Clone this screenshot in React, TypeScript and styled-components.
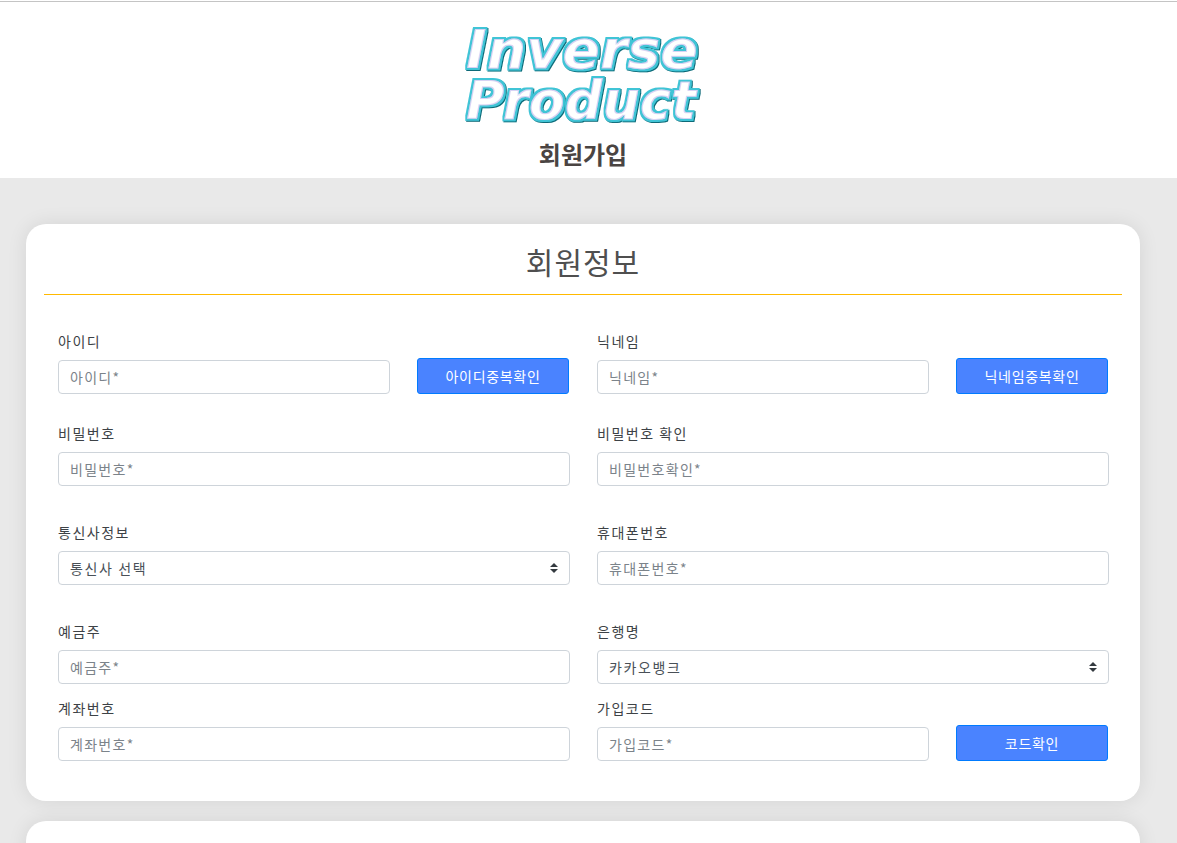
import React from "react";
import styled, { createGlobalStyle } from "styled-components";

const GlobalStyle = createGlobalStyle`
  html, body {
    margin: 0;
    padding: 0;
    height: 100%;
    overflow: hidden;
    background: #e9e9e9;
  }
  * {
    box-sizing: border-box;
  }
  body {
    font-family: "Noto Sans CJK KR", "Noto Sans", sans-serif;
    color: #212529;
  }
`;

const Page = styled.div`
  height: 843px;
  overflow: hidden;
  background: #e9e9e9;
`;

const TopRule = styled.div`
  align-self: stretch;
  height: 2px;
  border-bottom: 1px solid #c4c4c4;
`;

const Header = styled.header`
  height: 178px;
  background: #fff;
  display: flex;
  flex-direction: column;
  align-items: center;
`;

const HeaderBody = styled.div`
  padding: 21px 11px 0 0;
  display: flex;
  flex-direction: column;
  align-items: center;
`;

const SignupTitle = styled.h1`
  margin: 12px 0 0;
  font-size: 24px;
  line-height: 34px;
  font-weight: 700;
  color: #4a4442;
`;

const Content = styled.main`
  padding: 46px 37px 0 26px;
  display: flex;
  flex-direction: column;
  gap: 20px;
`;

const Card = styled.section<{ $tall?: boolean }>`
  min-height: ${(p) => (p.$tall ? "200px" : "0")};
  padding: 0 18px 40px;
  background: #fff;
  border-radius: 20px;
  box-shadow: 0 0 20px rgba(0, 0, 0, 0.09);
`;

const CardTitle = styled.h2`
  margin: 0;
  height: 71px;
  font-size: 30px;
  line-height: 74px;
  font-weight: 400;
  letter-spacing: 1px;
  text-align: center;
  color: #4f4f4f;
  border-bottom: 1px solid #ffb900;
`;

const Form = styled.form`
  padding: 36px 13px 0 14px;
`;

const Row = styled.div<{ $gap?: number }>`
  display: grid;
  grid-template-columns: 512px 512px;
  column-gap: 27px;
  margin-top: ${(p) => p.$gap ?? 0}px;
`;

const FieldRow = styled.div`
  display: flex;
  justify-content: space-between;
  align-items: flex-end;
`;

const Field = styled.div<{ $short?: boolean }>`
  width: ${(p) => (p.$short ? "332px" : "100%")};
`;

const Label = styled.label`
  display: block;
  margin-bottom: 8px;
  font-size: 14px;
  line-height: 21px;
  letter-spacing: 1.5px;
  color: #3d4246;
`;

const Input = styled.input`
  display: block;
  width: 100%;
  height: 34px;
  padding: 0 11px;
  border: 1px solid #ced4da;
  border-radius: 4px;
  background: #fff;
  font-family: inherit;
  font-size: 14px;
  letter-spacing: 1.3px;
  color: #495057;
  outline: none;

  &::placeholder {
    color: #7b838a;
    opacity: 1;
  }
`;

const Select = styled.select`
  display: block;
  width: 100%;
  height: 34px;
  padding: 0 24px 0 11px;
  border: 1px solid #ced4da;
  border-radius: 4px;
  font-family: inherit;
  font-size: 14px;
  letter-spacing: 1.6px;
  color: #495057;
  outline: none;
  appearance: none;
  background: #fff
    url("data:image/svg+xml,%3csvg xmlns='http://www.w3.org/2000/svg' width='4' height='5' viewBox='0 0 4 5'%3e%3cpath fill='%23343a40' d='M2 0L0 2h4zm0 5L0 3h4z'/%3e%3c/svg%3e")
    right 11px center / 8px 10px no-repeat;
`;

const CheckButton = styled.button`
  width: 152px;
  height: 36px;
  margin-right: 1px;
  border: 1px solid #007bff;
  border-radius: 3px;
  background: #4a83ff;
  color: #fff;
  font-family: inherit;
  font-size: 14px;
  letter-spacing: 0.7px;
  cursor: pointer;
`;

const LogoSvg = styled.svg`
  display: block;
  overflow: visible;
`;

const logoLines = [
  { text: "Inverse", y: 45, width: 232 },
  { text: "Product", y: 96, width: 230 },
];

function Logo() {
  return (
    <LogoSvg width="236" height="102" viewBox="0 0 236 102" role="img">
      <defs>
        <filter id="bevel" x="-5%" y="-15%" width="110%" height="130%">
          <feMorphology in="SourceAlpha" operator="dilate" radius="1.9" result="wide" />
          <feOffset in="wide" dx="1.1" dy="1.3" result="wideShift" />
          <feFlood floodColor="#0b6a78" />
          <feComposite in2="wideShift" operator="in" result="shadow" />
          <feMorphology in="SourceAlpha" operator="dilate" radius="1.5" result="mid" />
          <feFlood floodColor="#3fc4d6" />
          <feComposite in2="mid" operator="in" result="rim" />
          <feMorphology in="SourceAlpha" operator="dilate" radius="0.2" result="inner" />
          <feFlood floodColor="#d8d3f4" />
          <feComposite in2="inner" operator="in" result="edge" />
          <feMorphology in="SourceAlpha" operator="erode" radius="0.5" result="core" />
          <feFlood floodColor="#ffffff" />
          <feComposite in2="core" operator="in" result="face" />
          <feMerge result="merged">
            <feMergeNode in="shadow" />
            <feMergeNode in="rim" />
            <feMergeNode in="edge" />
            <feMergeNode in="face" />
          </feMerge>
          <feGaussianBlur in="merged" stdDeviation="0.6" />
        </filter>
      </defs>
      {logoLines.map((line) => (
        <text
          key={line.text}
          x="1"
          y={line.y}
          textLength={line.width}
          lengthAdjust="spacingAndGlyphs"
          fontFamily="DejaVu Sans, sans-serif"
          fontWeight="700"
          fontStyle="italic"
          fontSize="54"
          fill="#fff"
          filter="url(#bevel)"
        >
          {line.text}
        </text>
      ))}
    </LogoSvg>
  );
}

export default function App() {
  return (
    <Page>
      <GlobalStyle />
      <Header>
        <TopRule />
        <HeaderBody>
          <Logo />
          <SignupTitle>회원가입</SignupTitle>
        </HeaderBody>
      </Header>
      <Content>
        <Card>
          <CardTitle>회원정보</CardTitle>
          <Form>
            <Row>
              <FieldRow>
                <Field $short>
                  <Label>아이디</Label>
                  <Input placeholder="아이디*" />
                </Field>
                <CheckButton type="button">아이디중복확인</CheckButton>
              </FieldRow>
              <FieldRow>
                <Field $short>
                  <Label>닉네임</Label>
                  <Input placeholder="닉네임*" />
                </Field>
                <CheckButton type="button">닉네임중복확인</CheckButton>
              </FieldRow>
            </Row>
            <Row $gap={29}>
              <Field>
                <Label>비밀번호</Label>
                <Input placeholder="비밀번호*" />
              </Field>
              <Field>
                <Label>비밀번호 확인</Label>
                <Input placeholder="비밀번호확인*" />
              </Field>
            </Row>
            <Row $gap={36}>
              <Field>
                <Label>통신사정보</Label>
                <Select defaultValue="">
                  <option value="">통신사 선택</option>
                </Select>
              </Field>
              <Field>
                <Label>휴대폰번호</Label>
                <Input placeholder="휴대폰번호*" />
              </Field>
            </Row>
            <Row $gap={36}>
              <Field>
                <Label>예금주</Label>
                <Input placeholder="예금주*" />
              </Field>
              <Field>
                <Label>은행명</Label>
                <Select defaultValue="kakao">
                  <option value="kakao">카카오뱅크</option>
                </Select>
              </Field>
            </Row>
            <Row $gap={14}>
              <Field>
                <Label>계좌번호</Label>
                <Input placeholder="계좌번호*" />
              </Field>
              <FieldRow>
                <Field $short>
                  <Label>가입코드</Label>
                  <Input placeholder="가입코드*" />
                </Field>
                <CheckButton type="button">코드확인</CheckButton>
              </FieldRow>
            </Row>
          </Form>
        </Card>
        <Card $tall />
      </Content>
    </Page>
  );
}
